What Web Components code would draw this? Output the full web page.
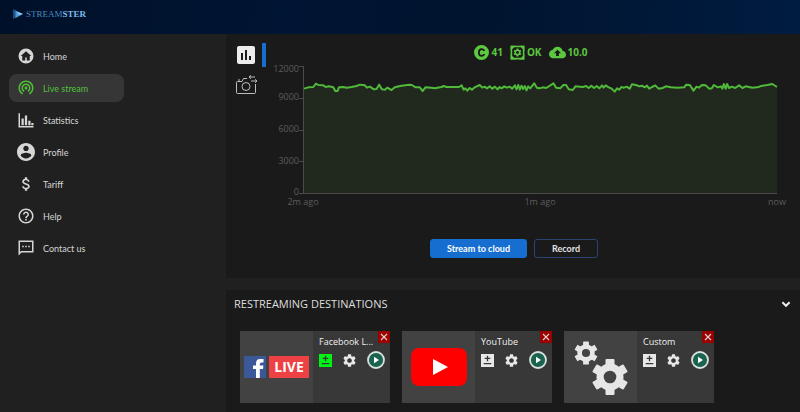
<!DOCTYPE html>
<html lang="en">
<head>
<meta charset="utf-8">
<title>Streamster</title>
<style>
    html, body {
        margin: 0;
        min-height: 100%;
        background: #202020;
    }
    body {
        font-family: "Open Sans", "Noto Sans", sans-serif;
        font-size: 9px;
        color: #d6d6d6;
    }
</style>
</head>
<body>
<stream-app>
    <brand-header slot="header"></brand-header>
    <side-nav slot="nav">
        <nav-item icon="home" href="#home">Home</nav-item>
        <nav-item icon="live" href="#live" active>Live stream</nav-item>
        <nav-item icon="stats" href="#statistics">Statistics</nav-item>
        <nav-item icon="profile" href="#profile">Profile</nav-item>
        <nav-item icon="tariff" href="#tariff">Tariff</nav-item>
        <nav-item icon="help" href="#help">Help</nav-item>
        <nav-item icon="contact" href="#contact">Contact us</nav-item>
    </side-nav>
    <stream-panel></stream-panel>
    <restream-panel>
        <span slot="title">RESTREAMING DESTINATIONS</span>
        <destination-card logo="facebook" linked>Facebook L...</destination-card>
        <destination-card logo="youtube">YouTube</destination-card>
        <destination-card logo="custom">Custom</destination-card>
    </restream-panel>
</stream-app>

<script>
const GEAR = 'M19.14 12.94c.04-.3.06-.61.06-.94 0-.32-.02-.64-.07-.94l2.03-1.58c.18-.14.23-.41.12-.61l-1.92-3.32c-.12-.22-.37-.29-.59-.22l-2.39.96c-.5-.38-1.03-.7-1.62-.94l-.36-2.54c-.04-.24-.24-.41-.48-.41h-3.84c-.24 0-.43.17-.47.41l-.36 2.54c-.59.24-1.13.57-1.62.94l-2.39-.96c-.22-.08-.47 0-.59.22L2.74 8.87c-.12.21-.08.47.12.61l2.03 1.58c-.05.3-.09.63-.09.94s.02.64.07.94l-2.03 1.58c-.18.14-.23.41-.12.61l1.92 3.32c.12.22.37.29.59.22l2.39-.96c.5.38 1.03.7 1.62.94l.36 2.54c.05.24.24.41.48.41h3.84c.24 0 .44-.17.47-.41l.36-2.54c.59-.24 1.13-.56 1.62-.94l2.39.96c.22.08.47 0 .59-.22l1.92-3.32c.12-.22.07-.47-.12-.61l-2.01-1.58zM12 15.6c-1.98 0-3.6-1.62-3.6-3.6s1.62-3.6 3.6-3.6 3.6 1.62 3.6 3.6-1.62 3.6-3.6 3.6z'

// chunkier gear with six square teeth, centred on 0,0
const BIG_GEAR = `
    <g fill="#e6e6e6">
        <rect x="-5" y="-20" width="10" height="40" rx="1"/>
        <rect x="-5" y="-20" width="10" height="40" rx="1" transform="rotate(60)"/>
        <rect x="-5" y="-20" width="10" height="40" rx="1" transform="rotate(120)"/>
        <circle r="15"/>
    </g>
    <circle r="7" fill="#424242"/>`

// name: [viewBox, markup]
const ICONS = {
    home: ['0 0 24 24', '<path fill-rule="evenodd" d="M12 2a10 10 0 1 0 0 20a10 10 0 1 0 0-20zM12 5.500l7 6.500h-2v6h-4v-4h-2v4h-4v-6h-2z"/>'],
    live: ['0 1 24 24', '<path d="M12 11c-1.100 0-2 .9-2 2s.9 2 2 2 2-.9 2-2-.9-2-2-2zm6 2c0-3.310-2.690-6-6-6s-6 2.690-6 6c0 2.220 1.210 4.150 3 5.190l1-1.740c-1.190-.7-2-1.970-2-3.450 0-2.210 1.790-4 4-4s4 1.790 4 4c0 1.480-.81 2.750-2 3.450l1 1.740c1.790-1.040 3-2.970 3-5.190zM12 3C6.480 3 2 7.480 2 13c0 3.700 2.010 6.920 4.990 8.650l1-1.730C5.610 18.530 4 15.960 4 13c0-4.420 3.580-8 8-8s8 3.580 8 8c0 2.960-1.610 5.530-4 6.920l1 1.730c2.990-1.730 5-4.950 5-8.650 0-5.520-4.480-10-10-10z"/>'],
    stats: ['0 0 24 24', '<path d="M2 3h2v17h18v2H2zM6 10h3v9H6zM10.500 6h3v13h-3zM15 13h3v6h-3zM19 16h3v3h-3z"/>'],
    profile: ['2 2 20 20', '<path d="M12 2C6.480 2 2 6.480 2 12s4.480 10 10 10 10-4.480 10-10S17.520 2 12 2zm0 3c1.660 0 3 1.340 3 3s-1.340 3-3 3-3-1.340-3-3 1.340-3 3-3zm0 14.200c-2.500 0-4.710-1.280-6-3.220.03-1.990 4-3.080 6-3.080 1.990 0 5.970 1.090 6 3.080-1.290 1.940-3.500 3.220-6 3.220z"/>'],
    tariff: ['0 0 24 24', '<path d="M12.300 10.900c-2.270-.59-3-1.200-3-2.150 0-1.090 1.010-1.850 2.700-1.850 1.780 0 2.440.85 2.500 2.100h2.210c-.07-1.720-1.120-3.300-3.210-3.810V3h-3v2.160c-1.940.42-3.500 1.680-3.500 3.610 0 2.310 1.910 3.460 4.700 4.130 2.500.6 3 1.480 3 2.410 0 .69-.49 1.790-2.700 1.790-2.060 0-2.870-.92-2.980-2.100h-2.200c.12 2.190 1.760 3.420 3.680 3.830V21h3v-2.150c1.950-.37 3.500-1.500 3.500-3.550 0-2.840-2.430-3.810-4.700-4.400z"/>'],
    help: ['0 0 24 24', '<path d="M11 18h2v-2h-2v2zm1-16C6.480 2 2 6.480 2 12s4.480 10 10 10 10-4.480 10-10S17.520 2 12 2zm0 18c-4.410 0-8-3.590-8-8s3.590-8 8-8 8 3.590 8 8-3.590 8-8 8zm0-14c-2.210 0-4 1.790-4 4h2c0-1.100.9-2 2-2s2 .9 2 2c0 2-3 1.750-3 5h2c0-2.250 3-2.500 3-5 0-2.210-1.790-4-4-4z"/>'],
    contact: ['0 0 24 24', '<path d="M22 2H2v20l4-4h16zM20 16H5.200L4 17.200V4h16zM7 9h2v2H7zM11 9h2v2h-2zM15 9h2v2h-2z" fill-rule="evenodd"/>'],
    chart: ['3 3 18 18', '<path d="M19 3H5c-1.100 0-2 .9-2 2v14c0 1.100.9 2 2 2h14c1.100 0 2-.9 2-2V5c0-1.100-.9-2-2-2zM9 17H7v-7h2v7zm4 0h-2V7h2v10zm4 0h-2v-4h2v4z"/>'],
    camera: ['0 0 22 20', '<g fill="none" stroke="currentColor"><path d="M11 3.500H7.500L6 6.500H1.500q-1 0-1 1v10q0 1 1 1h17q1 0 1-1V9"/><circle cx="10" cy="11.500" r="4"/><path d="M19 2h-6M15 .3L13 2l2 1.700M15 6h6M19 4.300L21 6l-2 1.700M2 5h2"/></g>'],
    cpu: ['0 0 15 15', '<path fill-rule="evenodd" d="M7.500 0a7.500 7.500 0 1 0 0 15a7.500 7.500 0 1 0 0-15zM11 6H9.200Q8.800 5 7.600 5Q5.800 5 5.800 7.500T7.600 10Q8.800 10 9.200 9H11Q10.500 11.700 7.600 11.700Q4 11.700 4 7.500T7.600 3.300Q10.500 3.300 11 6z"/>'],
    state: ['0 0 24 24', `<path fill-rule="evenodd" d="M1 1h22v22H1zM3.500 3.500v17h17v-17z"/><path d="M1 1h8L1 9zM23 1h-8l8 8zM1 23h8l-8-8zM23 23h-8l8-8z"/><g transform="translate(4.200 4.200) scale(.65)"><path d="${GEAR}"/></g>`],
    cloud: ['0 2 24 20', '<path d="M19.350 10.040C18.670 6.590 15.640 4 12 4 9.110 4 6.600 5.640 5.350 8.040 2.340 8.360 0 10.910 0 14c0 3.310 2.690 6 6 6h13c2.760 0 5-2.240 5-5 0-2.640-2.050-4.780-4.650-4.960zM14 13v4h-4v-4H7l5-5 5 5h-3z"/>'],
    chevron: ['0 0 10 10', '<path d="M2 3.500l3 3 3-3" fill="none" stroke="currentColor" stroke-width="1.600"/>'],
    close: ['0 0 12 12', '<path d="M3 3l6 6M9 3l-6 6" stroke="currentColor" stroke-width="1.200"/>'],
    link: ['0 0 12 12', '<path fill-rule="evenodd" d="M0 0h12v12H0zM5.400 1.500v2H3.400v1.200h2v2h1.200v-2h2V3.500h-2v-2zM2.500 8.200v1.300h7V8.200z"/>'],
    gear: ['2 2 20 20', `<path d="${GEAR}"/>`],
    play: ['0 0 18 18', '<circle cx="9" cy="9" r="8" fill="#1b6351" stroke="#d9e2df" stroke-width="1.800"/><path fill="#fff" d="M7 5.800v6.400L12 9z"/>'],
    brand: ['0 0 10 12', '<path fill="#1d4f85" d="M0 1l3 1.500v7L0 11z"/><path fill="#4d9bd8" d="M2.500 2.500L10 6l-7.500 4z"/><path fill="#a8d4f5" d="M4 4l6 2-4 .8z"/>'],
    facebook: ['0 0 22 22', '<rect width="22" height="22" fill="#3b5998"/><path fill="#fff" d="M12 22v-9H9V9.600h3V7.400Q12 3 16.300 3H19.500v3.500H17.500Q15.800 6.500 15.800 8v1.600h3.600L19 13h-3.200v9z"/>'],
    youtube: ['0 0 56 38', '<rect width="56" height="38" rx="8" fill="#fe0000"/><path fill="#fff" d="M22 11v16l15-8z"/>'],
    custom: ['0 0 54 56', `<g transform="translate(12 14) scale(.58)">${BIG_GEAR}</g><g transform="translate(36 38) scale(.9)">${BIG_GEAR}</g>`]
}

/*
 * BASE ELEMENT
 */
class BaseElement extends HTMLElement {
    render(css, html) {
        const template = document.createElement('template')
        template.innerHTML = `<style>${css}</style>${html}`
        this.attachShadow({ mode: 'open' })
        this.shadowRoot.appendChild(template.content.cloneNode(true))
    }
}

/*
 * ICON
 */
class UiIcon extends BaseElement {
    connectedCallback() {
        if (this.shadowRoot) return
        const [box, body] = ICONS[this.getAttribute('name')]
        this.render(`
            :host { display: block; flex: none; width: 18px; height: 18px; }
            svg { display: block; width: 100%; height: 100%; fill: currentColor; }
        `, `<svg viewBox="${box}" aria-hidden="true">${body}</svg>`)
    }
}
customElements.define('ui-icon', UiIcon)

/*
 * PAGE SHELL
 */
class StreamApp extends BaseElement {
    constructor() {
        super()
        this.render(`
            :host { display: block; }
            .body { display: grid; grid-template-columns: 226px 1fr; }
            main { display: flex; flex-direction: column; gap: 12px; min-width: 0; }
        `, `
            <slot name="header"></slot>
            <div class="body">
                <slot name="nav"></slot>
                <main><slot></slot></main>
            </div>
        `)
    }
}
customElements.define('stream-app', StreamApp)

class BrandHeader extends BaseElement {
    constructor() {
        super()
        this.render(`
            :host { display: block; }
            header {
                display: flex;
                align-items: center;
                height: 34px;
                padding: 0 13px;
                box-sizing: border-box;
                background: linear-gradient(100deg, #001029, #001533 35%, #00142f 60%, #001c41);
            }
            a {
                display: flex;
                align-items: center;
                gap: 3px;
                height: 28px;
                margin-bottom: 6px;
                text-decoration: none;
                color: #4a88be;
                font: 9px/12px "Liberation Serif", serif;
            }
            ui-icon { width: 10px; height: 12px; }
            b { color: #7dbbe9; }
        `, `
            <header>
                <a href="#"><ui-icon name="brand"></ui-icon><span>STREAM<b>STER</b></span></a>
            </header>
        `)
    }
}
customElements.define('brand-header', BrandHeader)

/*
 * NAVIGATION
 */
class SideNav extends BaseElement {
    constructor() {
        super()
        this.render(`
            :host { display: block; background: #202020; }
            nav { display: flex; flex-direction: column; gap: 4px; padding: 8px 9px; }
        `, `<nav><slot></slot></nav>`)
    }
}
customElements.define('side-nav', SideNav)

class NavItem extends BaseElement {
    constructor() {
        super()
        this.render(`
            :host { display: block; }
            a {
                display: flex;
                align-items: center;
                gap: 8px;
                width: 115px;
                height: 28px;
                padding: 0 8px;
                box-sizing: border-box;
                border-radius: 8px;
                text-decoration: none;
                color: #d6d6d6;
                font-family: Lato, "Open Sans", sans-serif;
                white-space: nowrap;
            }
            :host([active]) a { background: #363636; color: #51c23a; }
        `, `
            <a href="${this.getAttribute('href')}">
                <ui-icon name="${this.getAttribute('icon')}"></ui-icon>
                <slot></slot>
            </a>
        `)
    }
}
customElements.define('nav-item', NavItem)

/*
 * BITRATE CHART
 */
class BitrateChart extends BaseElement {
    constructor() {
        super()
        const line = '12,38 25,34 40,33 48,23 55,27 70,28 77,33 87,31 100,34 106,45 113,45 117,34 130,33 140,35 155,33 170,30 180,26 195,28 201,35 210,32 222,40 230,39 238,26 246,40 256,41 262,35 275,42 285,34 305,29 330,26 336,27 348,34 360,34 369,45 377,34 395,35 405,37 425,33 432,30 440,33 478,33 486,28 492,41 497,37 503,44 510,36 517,41 525,34 540,27 548,35 555,32 562,37 570,31 578,38 586,32 594,40 600,33 606,37 614,31 622,35 630,32 638,38 646,28 651,40 656,27 661,41 666,29 671,39 676,30 681,43 686,31 692,37 704,22 712,35 720,37 730,34 740,36 762,22 770,35 782,37 792,27 800,27 808,40 820,42 828,31 850,33 860,30 868,36 876,29 884,36 892,30 900,37 908,28 913,35 919,28 928,34 936,37 946,47 953,37 960,41 966,33 974,35 982,32 991,38 998,25 1010,27 1020,31 1028,29 1036,34 1043,29 1050,38 1058,33 1068,28 1078,38 1090,36 1100,31 1115,34 1135,35 1155,34 1161,26 1172,27 1183,44 1192,32 1200,35 1208,27 1220,28 1230,38 1238,37 1244,27 1256,34 1265,31 1270,38 1274,24 1280,38 1284,24 1290,36 1298,32 1308,36 1320,28 1330,36 1340,31 1360,35 1378,33 1390,29 1405,27 1420,24 1434,33'
        this.render(`
            :host { display: block; color: #5c5c5c; }
            .chart { display: grid; grid-template-columns: 29px 4px 1fr; }
            .y {
                display: grid;
                grid-template-rows: 14px 28px 32px 32px 31px;
                align-items: end;
                justify-items: end;
                margin-top: -4px;
                line-height: 14px;
            }
            .ticks {
                display: flex;
                flex-direction: column;
                justify-content: space-between;
                height: 128px;
            }
            .ticks i { height: 1px; background: #4b4b4b; }
            svg {
                display: block;
                width: 100%;
                height: 128px;
                box-sizing: border-box;
                border: solid #4b4b4b;
                border-width: 0 0 1px 1px;
                overflow: visible;
            }
            polygon { fill: #21291e; }
            polyline { fill: none; stroke: #51b93a; stroke-width: 2; stroke-linejoin: round; vector-effect: non-scaling-stroke; }
            .x {
                grid-column: 3;
                display: flex;
                justify-content: space-between;
                margin: -3px -16px 0;
                line-height: 12px;
            }
            .x span { width: 32px; text-align: center; white-space: nowrap; }
        `, `
            <div class="chart">
                <div class="y"><span>12000</span><span>9000</span><span>6000</span><span>3000</span><span>0</span></div>
                <div class="ticks"><i></i><i></i><i></i><i></i><i></i></div>
                <svg viewBox="12 -30 1422 381" preserveAspectRatio="none" role="img" aria-label="Bitrate">
                    <polygon points="12,351 ${line} 1434,351"/>
                    <polyline points="${line}"/>
                </svg>
                <div class="x"><span>2m ago</span><span>1m ago</span><span>now</span></div>
            </div>
        `)
    }
}
customElements.define('bitrate-chart', BitrateChart)

/*
 * STREAM PANEL
 */
class StreamPanel extends BaseElement {
    constructor() {
        super()
        this.render(`
            :host { display: block; background: #1a1a1a; }
            .top { display: grid; grid-template-columns: 30px 1fr; gap: 4px; padding: 9px 23px 0 10px; }
            .tabs { display: flex; flex-direction: column; gap: 6px; }
            .tabs button {
                display: flex;
                align-items: center;
                width: 30px;
                height: 24px;
                padding: 0 0 0 1px;
                box-sizing: border-box;
                border: 0;
                background: none;
                color: #ececec;
            }
            .tabs .on { border-right: 4px solid #166fd0; }
            .tabs .shot { color: #bdbdbd; padding: 0; }
            .shot ui-icon { width: 22px; height: 20px; }
            .status {
                display: flex;
                justify-content: center;
                gap: 7px;
                height: 18px;
                margin-bottom: 5px;
                padding-left: 15px;
                color: #5bc83f;
                font-weight: bold;
                font-size: 10px;
            }
            .status span { display: flex; align-items: center; gap: 2px; }
            .status ui-icon { width: 15px; height: 15px; }
            .status .wide { width: 17px; }
            .actions { display: flex; justify-content: center; gap: 7px; padding: 31px 0 20px 2px; }
            .actions button {
                height: 19px;
                width: 64px;
                padding: 0;
                border: 1px solid #2b4370;
                border-radius: 3px;
                background: transparent;
                color: #e4e4e4;
                font: bold 9px/12px Lato, "Open Sans", sans-serif;
            }
            .actions .primary { width: 97px; border-color: #166fd0; background: #166fd0; color: #fff; }
        `, `
            <section>
                <div class="top">
                    <div class="tabs">
                        <button class="on" aria-label="Chart"><ui-icon name="chart"></ui-icon></button>
                        <button class="shot" aria-label="Camera"><ui-icon name="camera"></ui-icon></button>
                    </div>
                    <div>
                        <div class="status">
                            <span><ui-icon name="cpu"></ui-icon>41</span>
                            <span><ui-icon name="state"></ui-icon>OK</span>
                            <span><ui-icon class="wide" name="cloud"></ui-icon>10.0</span>
                        </div>
                        <bitrate-chart></bitrate-chart>
                    </div>
                </div>
                <div class="actions">
                    <button class="primary">Stream to cloud</button>
                    <button>Record</button>
                </div>
            </section>
        `)
    }
}
customElements.define('stream-panel', StreamPanel)

/*
 * RESTREAMING
 */
class RestreamPanel extends BaseElement {
    constructor() {
        super()
        this.render(`
            :host { display: block; background: #1a1a1a; }
            header { display: flex; align-items: center; justify-content: space-between; height: 28px; padding: 0 8px; }
            h2 { margin: 0; font-weight: normal; font-size: 11px; line-height: 16px; color: #dedede; }
            button { padding: 0; border: 0; background: none; color: #f0f0f0; }
            ui-icon { width: 12px; height: 12px; }
            .cards { display: flex; flex-wrap: wrap; gap: 12px; padding: 13px 14px 9px; }
        `, `
            <header>
                <h2><slot name="title"></slot></h2>
                <button aria-label="Collapse"><ui-icon name="chevron"></ui-icon></button>
            </header>
            <div class="cards"><slot></slot></div>
        `)
    }
}
customElements.define('restream-panel', RestreamPanel)

class DestinationCard extends BaseElement {
    constructor() {
        super()
        const logo = this.getAttribute('logo')
        const live = logo === 'facebook' ? '<b>LIVE</b>' : ''
        this.render(`
            :host {
                display: grid;
                grid-template-columns: 73px 77px;
                position: relative;
                height: 72px;
                background: #383838;
                color: #f0f0f0;
            }
            .logo { display: flex; align-items: center; justify-content: center; gap: 3px; background: #424242; }
            .youtube ui-icon { width: 56px; height: 38px; }
            .custom ui-icon { width: 54px; height: 56px; }
            .facebook ui-icon { width: 22px; height: 22px; }
            .logo b {
                width: 40px;
                background: #ed4144;
                color: #fff;
                font: bold 14px/22px "Open Sans", "Noto Sans", sans-serif;
                text-align: center;
            }
            .info { padding: 4px 5px 0 6px; }
            .name { line-height: 13px; white-space: nowrap; }
            .tools { display: flex; align-items: center; justify-content: space-between; height: 20px; padding-top: 2px; }
            button { padding: 0; border: 0; background: none; color: #e8e8e8; }
            .tools ui-icon { width: 13px; height: 13px; }
            .tools .play { width: 18px; height: 18px; }
            :host([linked]) .link { color: #00f514; }
            .close { position: absolute; top: 0; right: 0; background: #9b0000; color: #e8cccc; }
            .close ui-icon { width: 12px; height: 12px; }
        `, `
            <div class="logo ${logo}"><ui-icon name="${logo}"></ui-icon>${live}</div>
            <div class="info">
                <div class="name"><slot></slot></div>
                <div class="tools">
                    <button class="link" aria-label="Link"><ui-icon name="link"></ui-icon></button>
                    <button aria-label="Settings"><ui-icon name="gear"></ui-icon></button>
                    <button aria-label="Start"><ui-icon class="play" name="play"></ui-icon></button>
                </div>
            </div>
            <button class="close" aria-label="Remove"><ui-icon name="close"></ui-icon></button>
        `)
    }
}
customElements.define('destination-card', DestinationCard)
</script>
</body>
</html>
